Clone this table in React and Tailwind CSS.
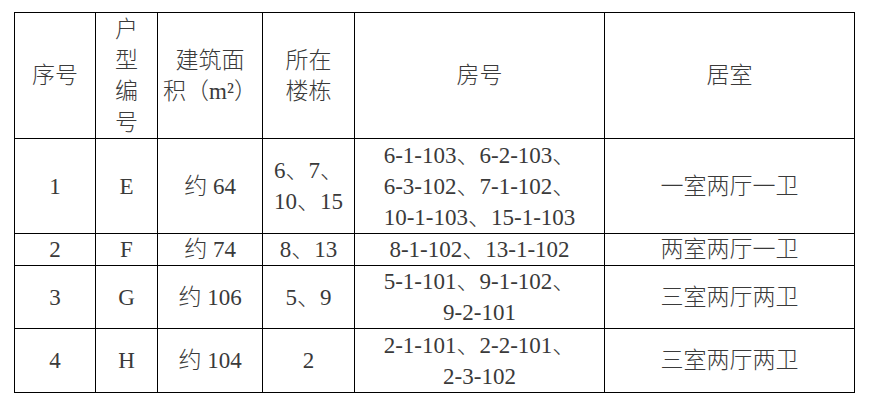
import React from 'react';

const rows = [
  ['1', 'E', '约 64', ['6、7、', '10、15'], ['6-1-103、6-2-103、', '6-3-102、7-1-102、', '10-1-103、15-1-103'], '一室两厅一卫'],
  ['2', 'F', '约 74', ['8、13'], ['8-1-102、13-1-102'], '两室两厅一卫'],
  ['3', 'G', '约 106', ['5、9'], ['5-1-101、9-1-102、', '9-2-101'], '三室两厅两卫'],
  ['4', 'H', '约 104', ['2'], ['2-1-101、2-2-101、', '2-3-102'], '三室两厅两卫'],
];

function Cell({ children }) {
  return (
    <div className="bg-white flex items-center justify-center text-center leading-[31px]">
      <div>{children}</div>
    </div>
  );
}

function Lines({ items }) {
  return items.map((t, i) => <div key={i}>{t}</div>);
}

export default function App() {
  return (
    <div className="bg-white min-h-[410px] pl-[14px] pt-[12px] font-['Liberation_Serif','Noto_Sans_CJK_SC',serif] font-light text-[23px] text-[#3a3a3a]">
      <div className="grid w-fit bg-black gap-px p-px grid-cols-[80px_61px_104px_91px_249px_249px] grid-rows-[125px_94px_31px_62px_63px]">
        <Cell>序号</Cell>
        <Cell>
          <Lines items={['户', '型', '编', '号']} />
        </Cell>
        <Cell>
          <Lines items={['建筑面', '积（m²）']} />
        </Cell>
        <Cell>
          <Lines items={['所在', '楼栋']} />
        </Cell>
        <Cell>房号</Cell>
        <Cell>居室</Cell>
        {rows.map((r) => (
          <React.Fragment key={r[0]}>
            <Cell>{r[0]}</Cell>
            <Cell>{r[1]}</Cell>
            <Cell>{r[2]}</Cell>
            <Cell>
              <Lines items={r[3]} />
            </Cell>
            <Cell>
              <Lines items={r[4]} />
            </Cell>
            <Cell>{r[5]}</Cell>
          </React.Fragment>
        ))}
      </div>
    </div>
  );
}
